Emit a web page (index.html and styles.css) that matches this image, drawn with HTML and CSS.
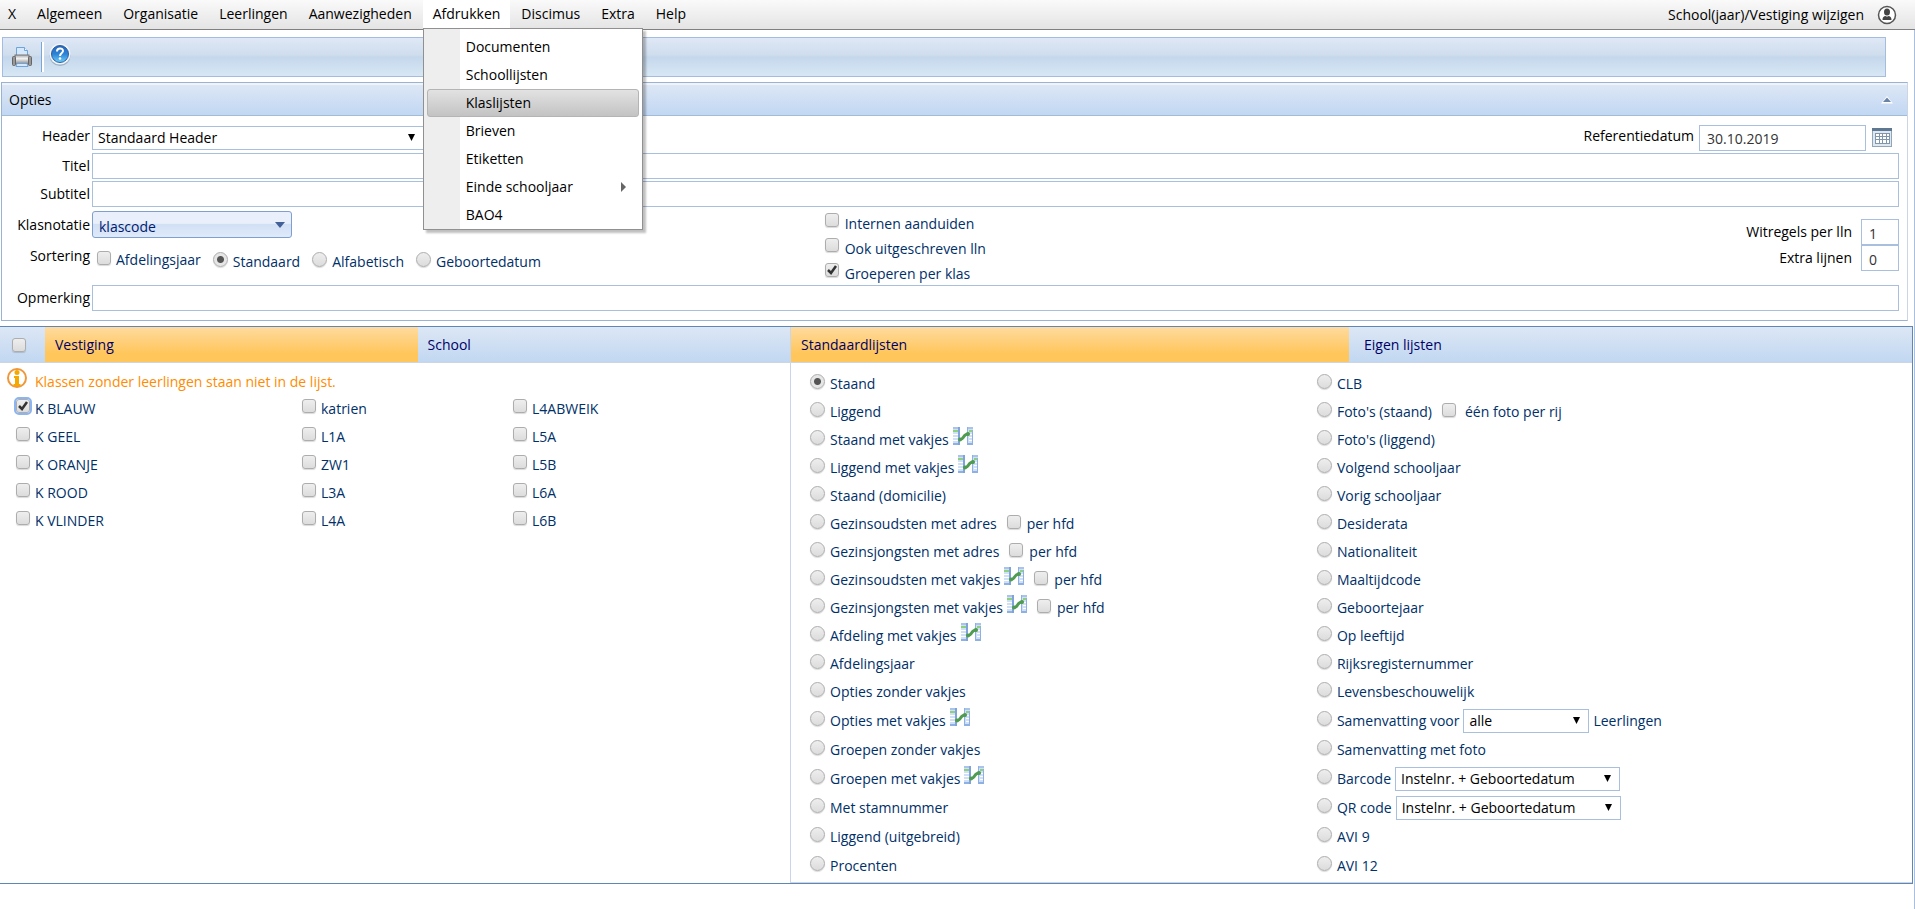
FILE: index.html
```html
<!DOCTYPE html>
<html lang="nl">
<head>
    <meta charset="UTF-8">
    <meta name="viewport" content="width=device-width, initial-scale=1.0">
    <title>Klaslijsten</title>
    <link rel="stylesheet" href="styles.css">
</head>
<body>
    <!-- shared icon -->
    <svg class="sprite" width="0" height="0" aria-hidden="true">
        <symbol id="vakjes" viewBox="0 0 20 18">
            <rect x="0" y="0" width="7" height="18" fill="#cfe0f6"/>
            <path d="M0 1h6" stroke="#a9c3ea" stroke-width="2"/>
            <path d="M0 4h5" stroke="#8fd07c" stroke-width="2"/>
            <path d="M0 7.500h5M0 10.500h5M0 13.500h5" stroke="#fff"/>
            <path d="M0 17h7" stroke="#8fb0e2" stroke-width="2"/>
            <path d="M6 0v18" stroke="#7fa3da" stroke-width="2"/>
            <rect x="14" y="0" width="6" height="18" fill="#cfe0f6"/>
            <path d="M14 1h6" stroke="#a9c3ea" stroke-width="2"/>
            <path d="M16 4h4" stroke="#8fd07c" stroke-width="2"/>
            <path d="M16 7.500h3M16 10.500h3M16 13.500h3" stroke="#fff"/>
            <path d="M14 17h6" stroke="#8fb0e2" stroke-width="2"/>
            <path d="M14.500 0v18M19.500 3v15" stroke="#8fb0e2"/>
            <path d="M7 12.500c2 0 2.500-1 3.500-2.500s2-3 4.500-3" fill="none" stroke="#4f9b50" stroke-width="3" stroke-linecap="round"/>
            <circle cx="7" cy="12.500" r="2" fill="#4f9b50"/>
            <circle cx="15" cy="7" r="2" fill="#4f9b50"/>
        </symbol>
    </svg>

    <nav class="menubar">
        <ul class="menu">
            <li><a href="#">X</a></li>
            <li><a href="#">Algemeen</a></li>
            <li><a href="#">Organisatie</a></li>
            <li><a href="#">Leerlingen</a></li>
            <li><a href="#">Aanwezigheden</a></li>
            <li class="open">
                <a href="#">Afdrukken</a>
                <ul class="submenu">
                    <li><a href="#">Documenten</a></li>
                    <li><a href="#">Schoollijsten</a></li>
                    <li><a href="#" class="active">Klaslijsten</a></li>
                    <li><a href="#">Brieven</a></li>
                    <li><a href="#">Etiketten</a></li>
                    <li><a href="#" class="has-children">Einde schooljaar</a></li>
                    <li><a href="#">BAO4</a></li>
                </ul>
            </li>
            <li><a href="#">Discimus</a></li>
            <li><a href="#">Extra</a></li>
            <li><a href="#">Help</a></li>
        </ul>
        <a href="#" class="switch">School(jaar)/Vestiging wijzigen</a>
        <button type="button" class="icon-button" aria-label="Gebruiker">
            <svg width="20" height="20" viewBox="0 0 20 20">
                <circle cx="10" cy="10" r="8.500" fill="#fff" stroke="#555" stroke-width="1.500"/>
                <ellipse cx="10" cy="7" rx="3" ry="3.500" fill="#444"/>
                <path d="M5.500 15c0-3 1.500-4 3-4 1 .700 2 .700 3 0 1.500 0 3 1 3 4z" fill="#444"/>
            </svg>
        </button>
    </nav>

    <main class="page">
        <div class="toolbar">
            <button type="button" class="icon-button" aria-label="Afdrukken">
                <svg width="20" height="20" viewBox="0 0 20 20">
                    <defs>
                        <linearGradient id="metal" x1="0" y1="0" x2="0" y2="1">
                            <stop offset="0" stop-color="#aaa"/>
                            <stop offset=".4" stop-color="#f2f2f2"/>
                            <stop offset="1" stop-color="#8a8a8a"/>
                        </linearGradient>
                    </defs>
                    <path d="M4.500 9V.500h8l3 3V9z" fill="#d5e8fc" stroke="#6fa3dc"/>
                    <path d="M12.500.500v3h3" fill="#fff" stroke="#6fa3dc"/>
                    <rect x="3" y="8" width="14" height="9" fill="url(#metal)" stroke="#777"/>
                    <rect x=".5" y="9.500" width="3" height="9" rx="1" fill="#999" stroke="#666"/>
                    <rect x="16.500" y="9.500" width="3" height="9" rx="1" fill="#999" stroke="#666"/>
                    <path d="M5 16.500h10l1 3H4z" fill="#d5e8fc" stroke="#6fa3dc"/>
                </svg>
            </button>
            <span class="separator"></span>
            <button type="button" class="icon-button help" aria-label="Help">
                <svg width="22" height="24" viewBox="0 0 22 24">
                    <defs>
                        <linearGradient id="ball" x1="0" y1="0" x2="0" y2="1">
                            <stop offset="0" stop-color="#2a66b8"/>
                            <stop offset=".5" stop-color="#2b83d6"/>
                            <stop offset="1" stop-color="#6fd0f8"/>
                        </linearGradient>
                    </defs>
                    <circle cx="11" cy="12.500" r="10.500" fill="#9fb2c8"/>
                    <circle cx="11" cy="11" r="10.500" fill="#f1f4f8"/>
                    <circle cx="11" cy="11" r="8.500" fill="url(#ball)" stroke="#2a5fa8"/>
                    <path d="M8 8.500c0-4 6-4 6-.500 0 2-3 2-3 5" fill="none" stroke="#fff" stroke-width="2"/>
                    <circle cx="11" cy="15.500" r="1.300" fill="#fff"/>
                </svg>
            </button>
        </div>

        <section class="panel">
            <header class="panel-header">
                <span>Opties</span>
                <button type="button" class="icon-button" aria-label="Inklappen">
                    <svg width="12" height="8" viewBox="0 0 12 8">
                        <path d="M0 7.500L6 0l6 7.500z" fill="#fff"/>
                        <path d="M2 6l4-4.500L10 6z" fill="#6a82a5"/>
                    </svg>
                </button>
            </header>
            <form class="options">
                <div class="row first-row">
                    <label class="field-label" for="header">Header</label>
                    <select id="header" class="select header-select"><option>Standaard Header</option></select>
                    <label class="date-label" for="date">Referentiedatum</label>
                    <input type="text" id="date" class="text date" value="30.10.2019">
                    <button type="button" class="icon-button calendar" aria-label="Kalender">
                        <svg width="20" height="19" viewBox="0 0 20 19">
                            <rect x=".5" y=".5" width="19" height="18" fill="#dfe8f0" stroke="#8fa5b8"/>
                            <path d="M0 1.500h20" stroke="#5d7890" stroke-width="3"/>
                            <rect x="3" y="5" width="14" height="11" fill="#fff"/>
                            <path d="M3 5.500h15M3 8.500h15M3 11.500h15M3 15.500h15M3.500 5v11M7.500 5v11M10.500 5v11M14.500 5v11M17.500 5v11" stroke="#7f96ab"/>
                        </svg>
                    </button>
                </div>
                <div class="row">
                    <label class="field-label" for="titel">Titel</label>
                    <input type="text" id="titel" class="text wide">
                </div>
                <div class="row">
                    <label class="field-label" for="subtitel">Subtitel</label>
                    <input type="text" id="subtitel" class="text wide">
                </div>
                <div class="middle">
                    <div class="middle-left">
                        <div class="row">
                            <label class="field-label" for="klasnotatie">Klasnotatie</label>
                            <select id="klasnotatie" class="combo"><option>klascode</option></select>
                        </div>
                        <div class="row sorting">
                            <span class="field-label">Sortering</span>
                            <label class="sort-check"><input type="checkbox">Afdelingsjaar</label>
                            <label><input type="radio" name="sort" checked>Standaard</label>
                            <label><input type="radio" name="sort">Alfabetisch</label>
                            <label><input type="radio" name="sort">Geboortedatum</label>
                        </div>
                    </div>
                    <div class="middle-center">
                        <label><input type="checkbox">Internen aanduiden</label>
                        <label><input type="checkbox">Ook uitgeschreven lln</label>
                        <label><input type="checkbox" checked>Groeperen per klas</label>
                    </div>
                    <div class="middle-right">
                        <label for="witregels">Witregels per lln</label>
                        <input type="text" id="witregels" class="text small" value="1">
                        <label for="extra">Extra lijnen</label>
                        <input type="text" id="extra" class="text small" value="0">
                    </div>
                </div>
                <div class="row">
                    <label class="field-label" for="opmerking">Opmerking</label>
                    <input type="text" id="opmerking" class="text wide">
                </div>
            </form>
        </section>

        <section class="lists">
            <div class="classes">
                <div class="tabs">
                    <span class="tab-check"><input type="checkbox" aria-label="Alle klassen"></span>
                    <button type="button" class="tab selected">Vestiging</button>
                    <button type="button" class="tab">School</button>
                </div>
                <p class="notice">
                    <svg width="20" height="20" viewBox="0 0 20 20">
                        <circle cx="10" cy="10" r="9" fill="#fff" stroke="#f0973a" stroke-width="2"/>
                        <circle cx="10" cy="4.500" r="2.500" fill="#f5a800"/>
                        <path d="M7 8h5v8h1.500v2h-7v-2H8v-6H7z" fill="#f5a800"/>
                    </svg>
                    Klassen zonder leerlingen staan niet in de lijst.
                </p>
                <div class="class-grid">
                    <label><input type="checkbox" class="focused" checked>K BLAUW</label>
                    <label><input type="checkbox">katrien</label>
                    <label><input type="checkbox">L4ABWEIK</label>
                    <label><input type="checkbox">K GEEL</label>
                    <label><input type="checkbox">L1A</label>
                    <label><input type="checkbox">L5A</label>
                    <label><input type="checkbox">K ORANJE</label>
                    <label><input type="checkbox">ZW1</label>
                    <label><input type="checkbox">L5B</label>
                    <label><input type="checkbox">K ROOD</label>
                    <label><input type="checkbox">L3A</label>
                    <label><input type="checkbox">L6A</label>
                    <label><input type="checkbox">K VLINDER</label>
                    <label><input type="checkbox">L4A</label>
                    <label><input type="checkbox">L6B</label>
                </div>
            </div>

            <div class="reports">
                <div class="tabs">
                    <button type="button" class="tab selected">Standaardlijsten</button>
                    <button type="button" class="tab own">Eigen lijsten</button>
                </div>
                <div class="report-columns">
                    <ul>
                        <li><label><input type="radio" name="list" checked>Staand</label></li>
                        <li><label><input type="radio" name="list">Liggend</label></li>
                        <li><label><input type="radio" name="list">Staand met vakjes</label><svg class="vakjes"><use href="#vakjes"/></svg></li>
                        <li><label><input type="radio" name="list">Liggend met vakjes</label><svg class="vakjes"><use href="#vakjes"/></svg></li>
                        <li><label><input type="radio" name="list">Staand (domicilie)</label></li>
                        <li><label><input type="radio" name="list">Gezinsoudsten met adres</label><label class="extra"><input type="checkbox">per hfd</label></li>
                        <li><label><input type="radio" name="list">Gezinsjongsten met adres</label><label class="extra"><input type="checkbox">per hfd</label></li>
                        <li><label><input type="radio" name="list">Gezinsoudsten met vakjes</label><svg class="vakjes"><use href="#vakjes"/></svg><label class="extra"><input type="checkbox">per hfd</label></li>
                        <li><label><input type="radio" name="list">Gezinsjongsten met vakjes</label><svg class="vakjes"><use href="#vakjes"/></svg><label class="extra"><input type="checkbox">per hfd</label></li>
                        <li><label><input type="radio" name="list">Afdeling met vakjes</label><svg class="vakjes"><use href="#vakjes"/></svg></li>
                        <li><label><input type="radio" name="list">Afdelingsjaar</label></li>
                        <li><label><input type="radio" name="list">Opties zonder vakjes</label></li>
                        <li><label><input type="radio" name="list">Opties met vakjes</label><svg class="vakjes"><use href="#vakjes"/></svg></li>
                        <li><label><input type="radio" name="list">Groepen zonder vakjes</label></li>
                        <li><label><input type="radio" name="list">Groepen met vakjes</label><svg class="vakjes"><use href="#vakjes"/></svg></li>
                        <li><label><input type="radio" name="list">Met stamnummer</label></li>
                        <li><label><input type="radio" name="list">Liggend (uitgebreid)</label></li>
                        <li><label><input type="radio" name="list">Procenten</label></li>
                    </ul>
                    <ul>
                        <li><label><input type="radio" name="list">CLB</label></li>
                        <li><label><input type="radio" name="list">Foto's (staand)</label><label class="extra photo"><input type="checkbox">één foto per rij</label></li>
                        <li><label><input type="radio" name="list">Foto's (liggend)</label></li>
                        <li><label><input type="radio" name="list">Volgend schooljaar</label></li>
                        <li><label><input type="radio" name="list">Vorig schooljaar</label></li>
                        <li><label><input type="radio" name="list">Desiderata</label></li>
                        <li><label><input type="radio" name="list">Nationaliteit</label></li>
                        <li><label><input type="radio" name="list">Maaltijdcode</label></li>
                        <li><label><input type="radio" name="list">Geboortejaar</label></li>
                        <li><label><input type="radio" name="list">Op leeftijd</label></li>
                        <li><label><input type="radio" name="list">Rijksregisternummer</label></li>
                        <li><label><input type="radio" name="list">Levensbeschouwelijk</label></li>
                        <li><label><input type="radio" name="list">Samenvatting voor</label><select class="select group-select" id="group"><option>alle</option></select><label for="group">Leerlingen</label></li>
                        <li><label><input type="radio" name="list">Samenvatting met foto</label></li>
                        <li><label><input type="radio" name="list">Barcode</label><select class="select code-select" aria-label="Barcode"><option>Instelnr. + Geboortedatum</option></select></li>
                        <li><label><input type="radio" name="list">QR code</label><select class="select code-select" aria-label="QR code"><option>Instelnr. + Geboortedatum</option></select></li>
                        <li><label><input type="radio" name="list">AVI 9</label></li>
                        <li><label><input type="radio" name="list">AVI 12</label></li>
                    </ul>
                </div>
            </div>
        </section>
    </main>
</body>
</html>
```

FILE: styles.css
```css
* {
    box-sizing: border-box;
}
body {
    display: flex;
    flex-direction: column;
    min-height: 100vh;
    margin: 0;
    background-color: white;
    color: black;
    font-family: "Open Sans", "Noto Sans", sans-serif;
    font-size: 14px;
    line-height: 20px;
}
input, select, button {
    font: inherit;
    margin: 0;
}
ul {
    list-style: none;
    margin: 0;
    padding: 0;
}
a {
    color: inherit;
    text-decoration: none;
}
.sprite {
    position: absolute;
}
.icon-button {
    display: flex;
    padding: 0;
    border: none;
    background: none;
    cursor: pointer;
}

/* menu */
.menubar {
    display: flex;
    align-items: center;
    height: 30px;
    padding-right: 18px;
    border-bottom: 1px solid #808080;
    background: linear-gradient(#fafafa, #e4e4e4);
}
.menu {
    display: flex;
    flex: 1;
    gap: 1px;
    margin-left: -2px;
}
.menu > li {
    position: relative;
}
.menu > li > a {
    display: block;
    height: 29px;
    padding: 4px 10px;
}
.menu > .open > a {
    background-color: white;
}
.submenu {
    position: absolute;
    z-index: 10;
    top: 28px;
    left: 0;
    width: 220px;
    padding: 4px 3px 0 3px;
    border: 1px solid #909090;
    background: linear-gradient(to right, #eee 36px, white 36px);
    box-shadow: 3px 3px 2px rgba(0,0,0,0.25);
}
.submenu a {
    display: flex;
    align-items: center;
    justify-content: space-between;
    height: 28px;
    padding: 0 12px 0 38px;
    border: 1px solid transparent;
    border-radius: 3px;
}
.submenu .active {
    border-color: #b4b4b4;
    background: linear-gradient(#e2e2e2, #c3c3c3);
}
.has-children::after {
    content: "";
    border: 5px solid transparent;
    border-left-color: #666;
    border-right: none;
}
.switch {
    margin-right: 13px;
}

/* page */
.page {
    flex: 1;
    padding-top: 7px;
    border-right: 1px solid #a9bfde;
}
.toolbar {
    display: flex;
    align-items: center;
    height: 40px;
    margin: 0 28px 5px 2px;
    padding: 0 9px;
    border: 1px solid #a3bcdf;
    background: linear-gradient(#dfe8f6, #cfdded 45%, #c5d7ec 50%, #d7e7f4);
}
.separator {
    width: 3px;
    height: 30px;
    margin: 0 5px 0 9px;
    border-left: 1px solid #7ba7d8;
    border-right: 2px solid white;
}
.help {
    margin-bottom: 4px;
}
.panel {
    margin: 0 6px 5px 1px;
    border: 1px solid #9ab3d3;
    border-right-color: #cbd5e4;
}
.panel-header {
    display: flex;
    align-items: center;
    justify-content: space-between;
    height: 33px;
    padding: 0 14px 0 7px;
    border-top: 2px solid #f0f4fa;
    border-bottom: 1px solid #a3bcd6;
    background: linear-gradient(#dde7f5, #c1d7f3);
}
.options {
    display: flex;
    flex-direction: column;
    gap: 2px;
    padding: 8px 8px 9px 0;
}
.row {
    display: flex;
    align-items: center;
}
.first-row {
    height: 27px;
}
.first-row label {
    padding-bottom: 3px;
}
.field-label {
    flex: 0 0 90px;
    padding-right: 2px;
    text-align: right;
}
.text {
    height: 26px;
    padding: 2px 7px 0 7px;
    border: 1px solid #a9bfde;
    background-color: white;
    color: #333;
}
.wide {
    flex: 1;
}
.select {
    height: 24px;
    padding: 0 5px;
    border: 1px solid #a9bfde;
    border-radius: 0;
    appearance: none;
    background: white url("data:image/svg+xml,%3Csvg xmlns='http://www.w3.org/2000/svg' width='7' height='7'%3E%3Cpath d='M0 0h7L3.500 7z'/%3E%3C/svg%3E") no-repeat right 8px center;
    color: black;
}
.header-select {
    width: 332px;
}
.date-label {
    margin-left: auto;
    padding-right: 5px;
}
.date {
    width: 167px;
}
.calendar {
    margin: 0 7px 0 6px;
}
.combo {
    width: 200px;
    height: 27px;
    padding: 4px 6px 0 6px;
    border: 1px solid #7f9fce;
    border-radius: 3px;
    appearance: none;
    background: url("data:image/svg+xml,%3Csvg xmlns='http://www.w3.org/2000/svg' width='10' height='6'%3E%3Cpath d='M0 0h10L5 6z' fill='%23436098'/%3E%3C/svg%3E") no-repeat right 6px center, linear-gradient(#e9f0fb 45%, #d2e0f5 50%, #dfeafa);
    color: #001a70;
}

/* check boxes and radios */
input[type="checkbox"], input[type="radio"] {
    flex: none;
    appearance: none;
    width: 14px;
    height: 14px;
    border: 1px solid #adadad;
    border-radius: 3px;
    background: linear-gradient(#eee, #dcdcdc);
    box-shadow: 0 1px 1px rgba(0,0,0,0.15);
}
input[type="radio"] {
    width: 15px;
    height: 15px;
    border-radius: 50%;
}
input[type="radio"]:checked {
    background: radial-gradient(circle, #555 3px, #e6e6e6 4px);
}
input[type="checkbox"]:checked {
    background: url("data:image/svg+xml,%3Csvg xmlns='http://www.w3.org/2000/svg' width='12' height='12'%3E%3Cpath d='M2 6l3 3 5-7' fill='none' stroke='%23333' stroke-width='2.500'/%3E%3C/svg%3E") no-repeat center, linear-gradient(#eee, #dcdcdc);
}
input.focused {
    outline: 2px solid #8cb4f0;
}
.middle {
    display: grid;
    grid-template-columns: 43% 1fr auto;
    margin-bottom: -3px;
    padding-top: 2px;
}
.middle label:not(.field-label), .reports label, .class-grid label {
    display: flex;
    align-items: center;
}
.sorting label, .middle-center label, .reports label, .class-grid label {
    color: #003068;
}
.sorting {
    align-items: flex-start;
    margin-top: 8px;
    gap: 12px;
}
.sorting .field-label {
    margin-right: -7px;
}
.sorting label {
    margin-top: 6px;
}
.sorting .sort-check {
    margin-top: 4px;
}
.sorting input, .middle-center input {
    margin: 0 5px 5px 0;
}
.middle-center {
    padding-left: 7px;
}
.middle-center label {
    height: 25px;
}
.middle-center input {
    margin: 0 6px 7px 0;
}
.middle-right {
    display: grid;
    grid-template-columns: auto 38px;
    column-gap: 9px;
    align-content: start;
    padding-top: 8px;
}
.middle-right label {
    justify-content: flex-end;
}

/* lists */
.lists {
    display: grid;
    grid-template-columns: 790px 1fr;
    margin-right: 1px;
    border: 1px solid #5f86b4;
    border-left: none;
}
.tabs {
    display: flex;
    height: 36px;
    border-bottom: 1px solid #cbd5e4;
    background: linear-gradient(#dde7f5, #c1d7f1);
}
.tab-check {
    display: flex;
    align-items: center;
    width: 45px;
    padding-left: 12px;
}
.tab {
    flex: 1;
    padding: 0 10px;
    border: none;
    background: none;
    color: #000066;
    text-align: left;
    cursor: pointer;
}
.own {
    padding-left: 15px;
}
.tab.selected {
    background: linear-gradient(#ffdb9f, #ffc65b 75%);
}
.notice {
    display: flex;
    align-items: center;
    gap: 8px;
    height: 32px;
    margin: 0;
    padding: 6px 0 0 7px;
    color: #ff8c00;
}
.notice svg {
    margin-bottom: 9px;
}
.class-grid {
    display: grid;
    grid-template-columns: 286px 211px 1fr;
    grid-auto-rows: 28px;
    padding-left: 16px;
}
.class-grid input {
    margin: 0 5px 6px 0;
}
.reports {
    border-left: 1px solid #cbd5e4;
}
.report-columns {
    display: grid;
    grid-template-columns: 46% 1fr;
    padding: 7px 0 2px 19px;
    border-bottom: 1px solid #cbd5e4;
}
.report-columns li {
    display: flex;
    align-items: center;
    gap: 4px;
    height: 28px;
}
.report-columns li:nth-child(n+13) {
    height: 29px;
}
.report-columns label input {
    margin: 0 5px 5px 0;
}
.vakjes {
    width: 20px;
    height: 18px;
    margin-bottom: 8px;
}
.extra {
    margin-left: 6px;
}
.report-columns .extra input {
    margin-right: 6px;
}
.report-columns .photo input {
    margin-right: 9px;
}
.group-select {
    width: 126px;
}
.code-select {
    width: 225px;
}
```
